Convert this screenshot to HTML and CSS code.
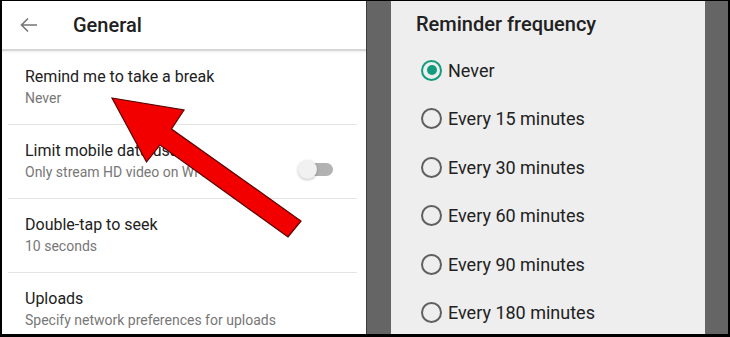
FILE: index.html
```html
<!DOCTYPE html>
<html lang="en">
<head>
    <meta charset="UTF-8">
    <title>General - Reminder frequency</title>
    <link rel="stylesheet" href="styles.css">
</head>
<body>

    <div class="frame">
        <!-- Pantalla de ajustes -->
        <div class="settings">
            <div class="header">
                <svg class="back" width="18" height="16" viewBox="0 0 18 16">
                    <path d="M17 8H2M8 1.5L1.5 8L8 14.5" fill="none" stroke="#757575" stroke-width="1.6"/>
                </svg>
                <h1>General</h1>
            </div>

            <div class="row">
                <div class="row-text">
                    <div class="title">Remind me to take a break</div>
                    <div class="sub">Never</div>
                </div>
            </div>
            <div class="row">
                <div class="row-text">
                    <div class="title">Limit mobile data usage</div>
                    <div class="sub">Only stream HD video on Wi-Fi</div>
                </div>
                <div class="switch"><span class="thumb"></span></div>
            </div>
            <div class="row">
                <div class="row-text">
                    <div class="title">Double-tap to seek</div>
                    <div class="sub">10 seconds</div>
                </div>
            </div>
            <div class="row last">
                <div class="row-text">
                    <div class="title">Uploads</div>
                    <div class="sub">Specify network preferences for uploads</div>
                </div>
            </div>

            <!-- Flecha roja encima -->
            <svg class="arrow" width="362" height="300" viewBox="0 0 362 300">
                <polygon points="110,97 182,109 169.5,128 299,220 286,236 158,144 144.5,161"
                         fill="#f20000" stroke="#5a0000" stroke-width="1.2" stroke-linejoin="miter"/>
            </svg>
        </div>

        <!-- Dialogo -->
        <div class="overlay">
            <div class="dialog">
                <h2>Reminder frequency</h2>
                <div class="option"><span class="radio checked"></span>Never</div>
                <div class="option"><span class="radio"></span>Every 15 minutes</div>
                <div class="option"><span class="radio"></span>Every 30 minutes</div>
                <div class="option"><span class="radio"></span>Every 60 minutes</div>
                <div class="option"><span class="radio"></span>Every 90 minutes</div>
                <div class="option"><span class="radio"></span>Every 180 minutes</div>
            </div>
        </div>
    </div>

</body>
</html>
```

FILE: styles.css
```css
body {
    margin: 0;
    background-color: #000;
    font-family: Roboto, "Liberation Sans", sans-serif;
    color: #212121;
}
.frame {
    width: 730px;
    height: 337px;
    box-sizing: border-box;
    padding: 1px 2px 3px 2px;
    display: flex;
    overflow: hidden;
}
.settings {
    position: relative;
    width: 364px;
    background-color: #fff;
    overflow: hidden;
}
.header {
    height: 48px;
    border-bottom: 2px solid #d6d6d6;
    display: flex;
    align-items: center;
    box-shadow: 0 1px 2px rgba(0, 0, 0, 0.08);
}
.back {
    margin-left: 18px;
    margin-right: 35px;
}
.header h1 {
    margin: 0;
    font-size: 20px;
    font-weight: 500;
    color: #212121;
}
.row {
    height: 74px;
    box-sizing: border-box;
    margin: 0 9px 0 6px;
    padding: 16px 0 0 17px;
    border-bottom: 1px solid #e4e4e4;
    display: flex;
    justify-content: space-between;
}
.row.last {
    border-bottom: none;
}
.title {
    font-size: 16px;
    line-height: 20px;
}
.sub {
    margin-top: 2px;
    font-size: 14px;
    line-height: 18px;
    color: #777;
}
.switch {
    position: relative;
    width: 34px;
    height: 13px;
    margin: 22px 24px 0 0;
    border-radius: 7px;
    background-color: #b2b2b2;
}
.switch .thumb {
    position: absolute;
    left: -1px;
    top: -3px;
    width: 19px;
    height: 19px;
    border-radius: 50%;
    background-color: #f1f1f1;
    box-shadow: 0 1px 3px rgba(0, 0, 0, 0.25);
}
.arrow {
    position: absolute;
    left: 0;
    top: 0;
}
.overlay {
    flex: 1;
    background-color: #656565;
    border-left: 1px solid #3a3a3a;
    padding: 0 23px 0 24px;
    display: flex;
}
.dialog {
    flex: 1;
    background-color: #eeeeee;
    padding: 11px 0 0 25px;
}
.dialog h2 {
    margin: 0 0 10px 0;
    font-size: 20px;
    font-weight: 500;
    line-height: 24px;
    color: #212121;
}
.option {
    height: 48.5px;
    display: flex;
    align-items: center;
    font-size: 18px;
    color: #212121;
}
.radio {
    width: 17px;
    height: 17px;
    border: 2px solid #5f5f5f;
    border-radius: 50%;
    margin: 0 6px 0 5px;
    box-sizing: content-box;
    position: relative;
}
.radio.checked {
    border-color: #139b7f;
}
.radio.checked::after {
    content: "";
    position: absolute;
    left: 3.5px;
    top: 3.5px;
    width: 10px;
    height: 10px;
    border-radius: 50%;
    background-color: #139b7f;
}
```
